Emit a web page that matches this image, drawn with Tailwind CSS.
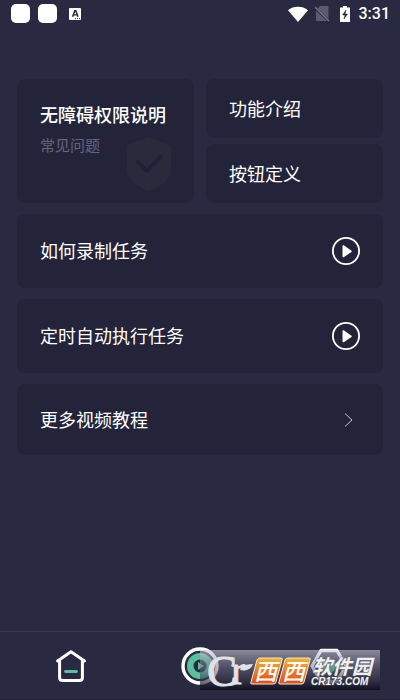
<!DOCTYPE html>
<html lang="zh-CN">
<head>
<meta charset="utf-8">
<meta name="viewport" content="width=device-width, initial-scale=1">
<title>教程</title>
<script src="https://cdn.jsdelivr.net/npm/@tailwindcss/browser@4"></script>
</head>
<body class="min-h-screen flex flex-col bg-[#2a2942] text-white font-['Noto_Sans_CJK_SC',sans-serif]">
  <header class="flex h-7 items-center justify-between pl-[11px] pr-[10px]">
    <div class="flex items-center gap-2 pb-px">
      <span class="size-[19px] rounded-[5px] bg-white"></span>
      <span class="size-[19px] rounded-[5px] bg-white"></span>
      <svg class="ml-1 size-[12px]" viewBox="0 0 12 13" preserveAspectRatio="none" aria-hidden="true">
        <rect width="12" height="13" rx="1" fill="#fff"/>
        <path d="M3.6 9.5 5.8 3h1L9 9.5M4.5 7.4h3.6" fill="none" stroke="#2a2942" stroke-width="1.5"/>
        <path d="M6 11.5h1m1 0h1m1 0h1" stroke="#2a2942"/>
      </svg>
    </div>
    <div class="flex items-center pb-px">
      <svg class="h-[16px] w-[20px]" viewBox="0 0 20 16" aria-hidden="true"><path d="M0 4.2C5.500-.3 14.500-.3 20 4.200L10 16Z" fill="#fff"/></svg>
      <svg class="ml-[7px] h-[17px] w-[15px]" viewBox="0 0 15 17" aria-hidden="true">
        <path d="M5 1h7.500q1 0 1 1v13q0 1-1 1H2q-1 0-1-1V5Z" fill="#5c5b6e"/>
        <path d="m0 3 14 13" stroke="#2a2942" stroke-width="2.400"/>
        <path d="m0 2 14 14" stroke="#77768a" stroke-width="1.300"/>
      </svg>
      <svg class="ml-[10px] h-[16px] w-[10px]" viewBox="0 0 10 16" aria-hidden="true">
        <path d="M3 0h4v1.500h3V16H0V1.500h3Z" fill="#fff"/>
        <path d="M6 4 2.500 9H5l-1 4 3.500-5H5Z" fill="#2a2942" stroke="#2a2942" stroke-width=".5"/>
      </svg>
      <time class="ml-[9px] font-[Roboto,sans-serif] text-base leading-5 font-medium">3:31</time>
    </div>
  </header>

  <main class="flex flex-1 flex-col gap-[11px] px-[17px] pt-[51px] text-lg leading-7">
    <section class="grid grid-cols-2 gap-3">
      <a href="#faq" class="relative block h-[124px] rounded-lg bg-[#23243a] px-[23px] pt-[21px]">
        <h2 class="whitespace-nowrap font-medium">无障碍权限说明</h2>
        <p class="mt-[5px] text-[15px] leading-6 text-[#65657a]">常见问题</p>
        <svg class="absolute right-[22px] bottom-[11px] h-[56px] w-[46px]" viewBox="0 0 46 56" aria-hidden="true">
          <path d="M23 1 44 9q1 1 1 3v21c0 11-10 17-22 22C11 50 1 44 1 33V12q0-2 1-3Z" fill="#2b2a3d"/>
          <path d="m12 26 9 9 14-15" fill="none" stroke="#202138" stroke-width="4" stroke-linecap="round" stroke-linejoin="round"/>
        </svg>
      </a>
      <div class="grid grid-rows-2 gap-1.5">
        <a href="#features" class="flex items-center rounded-lg bg-[#23243a] px-[23px] pb-px">功能介绍</a>
        <a href="#buttons" class="flex items-center rounded-lg bg-[#23243a] px-[23px] pb-px">按钮定义</a>
      </div>
    </section>

    <button class="flex h-[74px] w-full items-center justify-between rounded-lg bg-[#23243a] px-[23px] text-left">
      <span class="pb-0.5">如何录制任务</span>
      <svg class="size-7" viewBox="0 0 28 28" aria-hidden="true"><circle cx="14" cy="14" r="13.100" fill="none" stroke="#fff" stroke-width="1.800"/><path d="M11.300 9v10.500l7.700-5.200Z" fill="#fff" stroke="#fff" stroke-width="1.600" stroke-linejoin="round"/></svg>
    </button>
    <button class="flex h-[74px] w-full items-center justify-between rounded-lg bg-[#23243a] px-[23px] text-left">
      <span class="pb-0.5">定时自动执行任务</span>
      <svg class="size-7" viewBox="0 0 28 28" aria-hidden="true"><circle cx="14" cy="14" r="13.100" fill="none" stroke="#fff" stroke-width="1.800"/><path d="M11.300 9v10.500l7.700-5.200Z" fill="#fff" stroke="#fff" stroke-width="1.600" stroke-linejoin="round"/></svg>
    </button>
    <a href="#videos" class="flex h-[71px] items-center justify-between rounded-lg bg-[#23243a] pr-[30px] pl-[23px]">
      <span class="pb-0.5">更多视频教程</span>
      <svg class="h-[14px] w-[9px]" viewBox="0 0 9 14" aria-hidden="true"><path d="m1 .5 7 6.500-7 6.500" fill="none" stroke="#c8c8d0"/></svg>
    </a>
  </main>

  <nav class="relative grid h-[69px] grid-cols-3 items-center border-y border-t-[#3f3154] border-b-[#211f35] px-[6px]" aria-label="主导航">
    <a href="#home" class="flex justify-center" aria-label="首页">
      <svg class="size-[34px]" viewBox="0 0 34 34" aria-hidden="true">
        <path d="M3.500 12 17 2.800 30.500 12M5.600 11v17.500q0 3 3 3h16.800q3 0 3-3V11" fill="none" stroke="#fff" stroke-width="3" stroke-linecap="round" stroke-linejoin="round"/>
        <path d="M11.500 22.500h11" stroke="#59c09c" stroke-width="2.800" stroke-linecap="round"/>
      </svg>
    </a>
    <a href="#run" class="flex justify-center" aria-label="运行">
      <svg class="size-[38px]" viewBox="0 0 38 38" aria-hidden="true">
        <circle cx="19" cy="19" r="17" fill="none" stroke="#fff" stroke-width="3.400"/><circle cx="19" cy="19" r="13" fill="#59c09c"/>
        <circle cx="19" cy="19" r="6.500" fill="#2a2942"/><path d="m17 15 6 4-6 4Z" fill="#59c09c"/>
      </svg>
    </a>
    <a href="#settings" class="flex justify-center" aria-label="设置">
      <svg class="h-[36px] w-[38px]" viewBox="0 0 38 36" aria-hidden="true"><path d="M11 2.500h16L36 18l-9 15.500H11L2 18Z" fill="none" stroke="#fff" stroke-width="3.400" stroke-linejoin="round"/><circle cx="19" cy="18" r="7" fill="#59c09c"/></svg>
    </a>
    <svg class="absolute right-5 bottom-[9px] h-10 w-[180px] overflow-visible" viewBox="0 0 180 40" role="img" aria-label="西西软件园 CR173.COM">
      <defs>
        <linearGradient id="bar" x2="0" y2="1"><stop stop-color="#d0d0dc" stop-opacity=".58"/><stop offset=".5" stop-color="#65657a" stop-opacity=".5"/><stop offset="1" stop-color="#080812" stop-opacity=".78"/></linearGradient>
        <linearGradient id="tile" x2="0" y2="1"><stop stop-color="#f3b32c"/><stop offset="1" stop-color="#e34a1c"/></linearGradient>
      </defs>
      <rect width="180" height="40" fill="url(#bar)"/>
      <g fill="#e2e2e5" stroke="#e2e2e5" stroke-width="1">
        <text x="7" y="36" font-size="45" font-family="Liberation Serif, serif">C<tspan x="31" y="34" font-size="42">r</tspan></text>
        <path d="M40 20q1-6 13-6-3 8-13 6Z" stroke="none"/>
      </g>
      <g fill="url(#tile)" stroke="#f4e8dc"><path d="M60 8h21q2 0 1 2l-6 22q0 2-3 2H52q-2 0-1-2l6-22q1-2 3-2Z"/><path d="M88 8h21q2 0 1 2l-6 22q0 2-3 2H80q-2 0-1-2l6-22q1-2 3-2Z"/></g>
      <g fill="#fff" font-family="Noto Sans CJK SC, sans-serif" font-style="italic" font-weight="500">
        <text x="54" y="30" font-size="23">西</text><text x="82" y="30" font-size="23">西</text>
        <text x="112" y="24" font-size="20" font-weight="700" fill="#f1f1f3" stroke="#666672" stroke-width="1" paint-order="stroke">软件园</text>
      </g>
      <text x="111" y="35" fill="#f1f1f3" stroke="#444450" stroke-width="1" paint-order="stroke" font-family="Liberation Sans, sans-serif" font-style="italic" font-weight="700" font-size="10">CR173.COM</text>
    </svg>
  </nav>
</body>
</html>
